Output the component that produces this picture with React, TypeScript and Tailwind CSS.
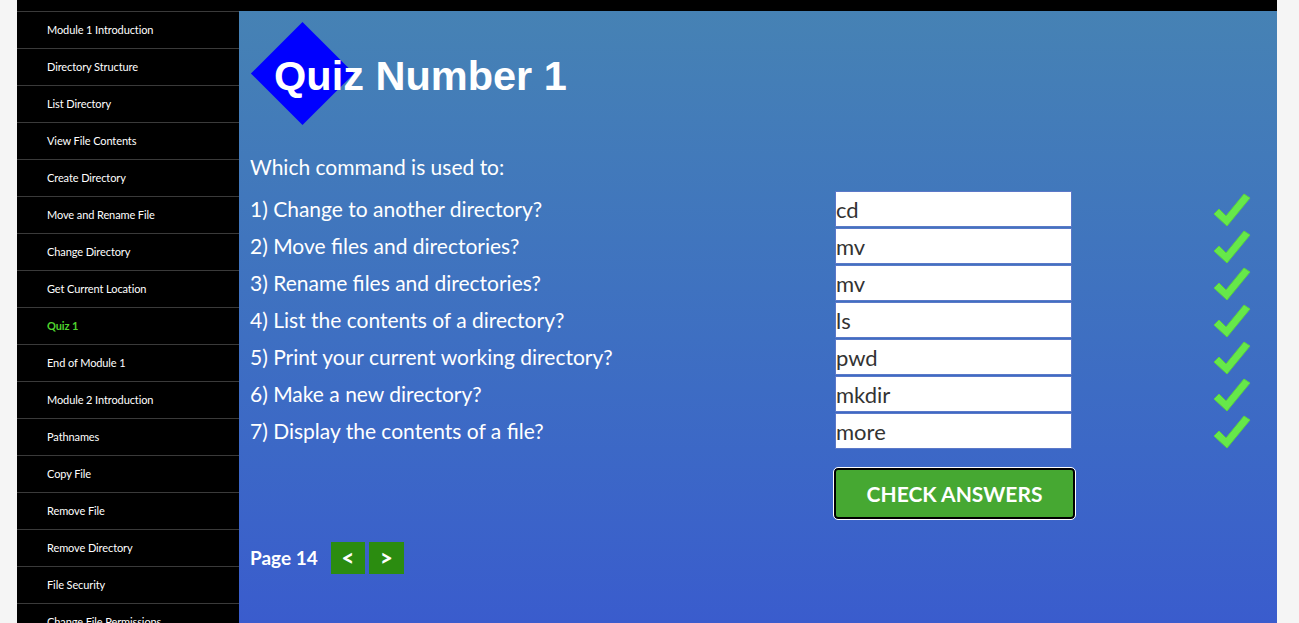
import React from "react";

const navItems = [
  "Module 1 Introduction",
  "Directory Structure",
  "List Directory",
  "View File Contents",
  "Create Directory",
  "Move and Rename File",
  "Change Directory",
  "Get Current Location",
  "Quiz 1",
  "End of Module 1",
  "Module 2 Introduction",
  "Pathnames",
  "Copy File",
  "Remove File",
  "Remove Directory",
  "File Security",
  "Change File Permissions",
];

const questions = [
  {q: "1) Change to another directory?", a: "cd"},
  {q: "2) Move files and directories?", a: "mv"},
  {q: "3) Rename files and directories?", a: "mv"},
  {q: "4) List the contents of a directory?", a: "ls"},
  {q: "5) Print your current working directory?", a: "pwd"},
  {q: "6) Make a new directory?", a: "mkdir"},
  {q: "7) Display the contents of a file?", a: "more"},
];

const Check = () => (
  <svg width="38" height="34" viewBox="0 0 38 34" className="block">
    <path
      d="M1 21 L6 16 L13 23 L31 1 L37 5 L14 33 Z"
      fill="#66e84a"
      stroke="#5ad23e"
      strokeWidth="1"
      strokeLinejoin="round"
    />
  </svg>
);

const Sidebar = () => (
  <nav className="w-[222px] shrink-0 bg-black">
    {navItems.map((item) => (
      <div
        key={item}
        className={`h-[37px] border-t border-[#3a3a3a] pl-[30px] flex items-center text-[11px] tracking-[-0.1px] ${
          item === "Quiz 1" ? "text-[#4fd32e] font-bold" : "text-white"
        }`}
      >
        {item}
      </div>
    ))}
  </nav>
);

export default function App() {
  return (
    <div className="min-h-screen bg-[#f5f5f5] font-['Lato','Liberation_Sans',sans-serif]">
      <div className="mx-[17px] w-[1260px] h-[623px] overflow-hidden flex flex-col">
        <div className="h-[11px] bg-black shrink-0" />
        <div className="flex flex-1 min-h-0">
          <Sidebar />
          <main className="flex-1 bg-gradient-to-b from-[#4682b4] to-[#3a5ccd] pl-[11px] pr-[26px] pt-[10px]">
            <div className="relative h-[106px] flex items-center">
              <div className="absolute left-[16px] top-[16px] w-[73px] h-[73px] bg-[#0000ff] rotate-45" />
              <h1 className="relative pl-[24px] pt-[4px] text-white font-bold text-[41.5px] font-['Liberation_Sans',Arial,sans-serif]">
                Quiz Number 1
              </h1>
            </div>
            <p className="mt-[27px] text-white text-[21px] leading-[26px]">Which command is used to:</p>
            <div className="mt-[11px] flex flex-col gap-[1px]">
              {questions.map((row, i) => (
                <div key={i} className="flex items-center h-[36px]">
                  <span className="w-[585px] text-white text-[21px]">{row.q}</span>
                  <div className="w-[237px] h-[36px] bg-white border border-[#5b78c8] flex items-center text-[22px] text-[#333]">
                    {row.a}
                  </div>
                  <div className="ml-auto pt-[2px]">
                    <Check />
                  </div>
                </div>
              ))}
            </div>
            <div className="mt-[19px] pl-[584px]">
              <button className="w-[241px] h-[51px] rounded-[4px] bg-[#46a832] border-2 border-black outline outline-1 outline-white text-white font-bold text-[21px]">
                CHECK ANSWERS
              </button>
            </div>
            <div className="mt-[23px] flex items-center">
              <span className="text-white font-bold text-[19px] w-[81px]">Page 14</span>
              <div className="flex gap-[4px]">
                <button className="w-[34px] h-[32px] bg-[#2b8c10] text-white font-black text-[22px] leading-none">&lt;</button>
                <button className="w-[35px] h-[32px] bg-[#2b8c10] text-white font-black text-[22px] leading-none">&gt;</button>
              </div>
            </div>
          </main>
        </div>
      </div>
    </div>
  );
}
